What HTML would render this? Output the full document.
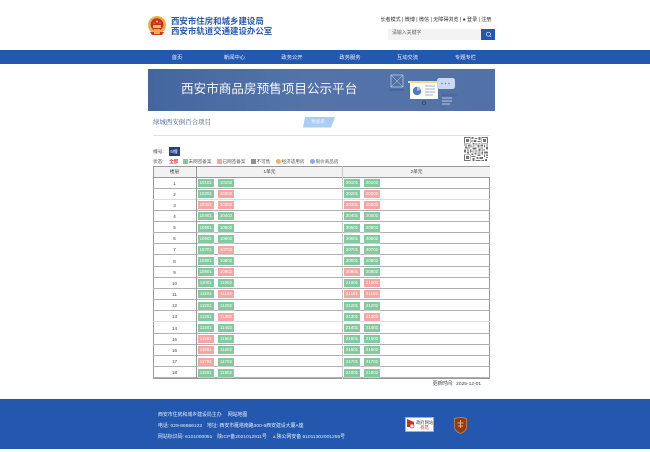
<!DOCTYPE html>
<html lang="zh-CN"><head><meta charset="utf-8"><title>西安市商品房预售项目公示平台</title>
<style>
html,body{margin:0;padding:0;background:#fff}
body{position:relative;width:650px;height:452px;overflow:hidden;font-family:"Liberation Sans","Noto Sans CJK SC",sans-serif;color:#444;filter:blur(.35px)}
.a{position:absolute;white-space:nowrap}
.n{position:absolute;top:50.5px;height:14px;line-height:14px;color:#eef3fb;font-size:5.3px;transform:translateX(-50%);white-space:nowrap}
.r{position:absolute;left:153px;width:337px;height:11.14px;border-bottom:.8px solid #b0b0b0;box-sizing:border-box}
.f{position:absolute;left:0;width:43px;text-align:center;font-size:4.6px;line-height:11px;color:#444}
.c{position:absolute;top:1.6px;width:16px;height:8px;line-height:8px;text-align:center;font-size:4.4px;color:#fff;box-shadow:0 0 0 .6px rgba(255,255,255,.6)}
.g{background:#83cb9f}.p{background:#f6a5a5;color:#fff}
.u1{left:44.7px}.u2{left:65px}.v1{left:191px}.v2{left:211px}
.ft{position:absolute;left:158px;color:#e3ecfa;font-size:4.9px;line-height:6px;white-space:nowrap}
.l{position:absolute;top:158.5px;font-size:4.6px;line-height:6px;color:#555;white-space:nowrap}
.s{position:absolute;top:159px;width:5px;height:5px}
</style></head><body>

<svg class="a" style="left:148px;top:15px" width="18" height="22" viewBox="0 0 18 22"><circle cx="9" cy="10" r="9" fill="#e5b245"/><circle cx="9" cy="9.5" r="6.3" fill="#cf2a22"/><rect x="5" y="10" width="8" height="3" fill="#efc65c"/><circle cx="9" cy="6.5" r="1.1" fill="#f3cf5e"/><circle cx="6" cy="8" r=".6" fill="#f3cf5e"/><circle cx="12" cy="8" r=".6" fill="#f3cf5e"/><path d="M2 17h14l-2 3H4z" fill="#d1352a"/><rect x="6" y="14" width="6" height="5" fill="#e5b245"/></svg>
<div class="a" style="left:171px;top:15.5px;font-size:8.45px;line-height:10.5px;color:#2a5ba8;font-weight:bold">西安市住房和城乡建设局<br>西安市轨道交通建设办公室</div>

<div class="a" style="left:380.5px;top:17px;font-size:5.05px;line-height:6px;color:#333">长者模式 | 微博 | 微信 | 无障碍浏览 | &#9679; 登录 | 注册</div>
<div class="a" style="left:388px;top:29px;width:93px;height:10.5px;background:#f3f3f3"></div>
<div class="a" style="left:392px;top:31px;font-size:4.9px;line-height:6.5px;color:#666">请输入关键字</div>
<div class="a" style="left:481px;top:29px;width:14px;height:10.5px;background:#2358ae"></div>
<svg class="a" style="left:484.5px;top:30.5px" width="7" height="7" viewBox="0 0 7 7"><circle cx="3.4" cy="3.2" r="2" fill="none" stroke="#dfe9f8" stroke-width=".7"/><path d="M4.8 4.7l1 1" stroke="#dfe9f8" stroke-width=".7"/></svg>

<div class="a" style="left:0;top:50px;width:650px;height:14px;background:#2358ae"></div>
<div class="n" style="left:177px">首页</div><div class="n" style="left:234.5px">新闻中心</div><div class="n" style="left:292px">政务公开</div><div class="n" style="left:350px">政务服务</div><div class="n" style="left:407.5px">互动交流</div><div class="n" style="left:465.5px">专题专栏</div>

<div class="a" style="left:148px;top:69px;width:347px;height:42px;background:linear-gradient(90deg,#44669f,#5373a9 45%,#5171a8 100%)"></div>
<div class="a" style="left:181px;top:81px;font-size:12.6px;line-height:16px;color:#f4f6fb">西安市商品房预售项目公示平台</div>
<svg class="a" style="left:385px;top:69px" width="110" height="42" viewBox="0 0 110 42">
<rect x="6" y="6" width="12" height="12" fill="none" stroke="#c5d2e8" stroke-width=".7"/><path d="M6 6l12 12M18 6L6 18" stroke="#c5d2e8" stroke-width=".5"/><path d="M5 21h14" stroke="#29406f" stroke-width=".7" stroke-dasharray="1 .6"/>
<rect x="23" y="12" width="32" height="2" fill="#f2d98c"/><rect x="25" y="14" width="28" height="16" fill="#fff"/>
<circle cx="32" cy="22" r="4.2" fill="#5678bd"/><path d="M32 22v-4.2a4.2 4.2 0 0 1 4 3z" fill="#a9bce4"/>
<path d="M40 17h10M40 20h10M40 23h10M40 26h8" stroke="#9fb2d3" stroke-width="1"/>
<rect x="52" y="9" width="18" height="11" rx="2.5" fill="#cdd8f3"/><circle cx="57" cy="14.5" r=".7" fill="#5678bd"/><circle cx="60.5" cy="14.5" r=".7" fill="#5678bd"/><circle cx="64" cy="14.5" r=".7" fill="#5678bd"/>
<circle cx="39" cy="34" r="1.8" fill="none" stroke="#29406f" stroke-width=".7"/>
<path d="M57 26h15" stroke="#29406f" stroke-width=".6" stroke-dasharray="1 .6"/><path d="M57 29h10M57 32h10M57 35h8" stroke="#bcc9e1" stroke-width="1"/>
</svg>

<div class="a" style="left:153px;top:118.5px;font-family:'Liberation Serif','Noto Serif CJK SC',serif;font-size:6.45px;line-height:8px;color:#3d5c8e">绿城西安倒百合项目</div>
<svg class="a" style="left:303px;top:116.5px" width="32" height="11"><path d="M2 0H32L28 10.5H0z" fill="#a9cdf3"/></svg>
<div class="a" style="left:303px;top:118px;width:30px;text-align:center;font-size:4.6px;line-height:7px;color:#f4f9ff">预查表</div>
<div class="a" style="left:153px;top:134.5px;width:337px;height:.8px;background:#e2e2e2"></div>

<svg class="a" style="left:464px;top:137px;opacity:.68;filter:blur(.3px)" width="24" height="24" viewBox="0 0 25 25" shape-rendering="crispEdges"><rect width="25" height="25" fill="#fff"/><path d="M0 0h7v7H0zM18 0h7v7h-7zM0 18h7v7H0z" fill="#333"/><path d="M1 1h5v5H1zM19 1h5v5h-5zM1 19h5v5H1z" fill="#fff"/><path d="M2 2h3v3H2zM20 2h3v3h-3zM2 20h3v3H2z" fill="#333"/><path d="M8 0h2v2H8zM11 1h3v1h-3zM15 0h2v3h-2zM8 3h1v2H8zM10 3h3v2h-3zM14 4h3v1h-3zM9 6h2v2H9zM12 6h1v3h-1zM14 6h3v1h-3zM0 8h3v1H0zM4 8h2v2H4zM7 8h1v3H7zM9 9h2v1H9zM14 8h2v3h-2zM17 8h3v2h-3zM21 8h1v3h-1zM23 8h2v1h-2zM1 10h2v2H1zM3 11h3v1H3zM9 11h4v2H9zM17 11h3v1h-3zM23 10h2v3h-2zM0 13h2v3H0zM3 13h2v1H3zM6 13h2v3H6zM9 14h1v2H9zM11 14h3v1h-3zM15 12h2v3h-2zM18 13h4v1h-4zM3 15h2v2H3zM11 16h2v2h-2zM14 16h3v1h-3zM18 15h2v3h-2zM21 15h4v2h-4zM8 17h2v2H8zM14 18h3v2h-3zM21 18h1v3h-1zM23 18h2v2h-2zM8 20h4v1H8zM13 21h2v2h-2zM16 21h4v2h-4zM23 21h2v1h-2zM9 22h2v3H9zM12 24h5v1h-5zM18 24h3v1h-3zM22 23h2v2h-2z" fill="#333"/></svg>

<div class="a" style="left:153px;top:148.5px;font-size:4.7px;line-height:6px;color:#555">幢号:</div>
<div class="a" style="left:168.5px;top:146.5px;width:11px;height:9.5px;line-height:9.5px;background:#22417e;color:#e8eefa;font-size:4.6px;text-align:center">5幢</div>

<div class="l" style="left:153px">状态:</div><div class="l" style="left:169px;color:#e22f2f;font-weight:bold">全部</div>
<div class="s" style="left:182.5px;background:#83cb9f"></div><div class="l" style="left:188.5px">未网签备案</div>
<div class="s" style="left:216.5px;background:#f6a5a5"></div><div class="l" style="left:222.5px">已网签备案</div>
<div class="s" style="left:250.5px;background:#8f8f8f"></div><div class="l" style="left:256.5px">不可售</div>
<div class="s" style="left:275.5px;background:#eeb365;border-radius:50%"></div><div class="l" style="left:281.5px">经济适用房</div>
<div class="s" style="left:309.5px;background:#8daee0;border-radius:50%"></div><div class="l" style="left:315.5px">限价商品房</div>

<div class="a" style="left:153px;top:166px;width:337px;height:212.5px;border:.8px solid #999;box-sizing:border-box"></div>
<div class="a" style="left:153.5px;top:166.5px;width:336px;height:11px;background:#f2f2f2"></div>
<div class="a" style="left:153px;top:177.2px;width:337px;height:.9px;background:#999"></div>
<div class="a" style="left:153px;top:167px;width:43px;text-align:center;font-size:4.7px;line-height:10px">楼层</div>
<div class="a" style="left:197px;top:167px;width:145px;text-align:center;font-size:4.7px;line-height:10px">1单元</div>
<div class="a" style="left:343px;top:167px;width:147px;text-align:center;font-size:4.7px;line-height:10px">2单元</div>

<div class="r" style="top:177.5px"><div class="f">1</div><div class="c g u1">10101</div><div class="c g u2">10102</div><div class="c g v1">20101</div><div class="c g v2">20102</div></div>
<div class="r" style="top:188.6px;border-bottom:1.6px solid #dcdcdc"><div class="f">2</div><div class="c g u1">10201</div><div class="c p u2">10202</div><div class="c g v1">20201</div><div class="c p v2">20202</div></div>
<div class="r" style="top:199.8px"><div class="f">3</div><div class="c p u1">10301</div><div class="c p u2">10302</div><div class="c p v1">20301</div><div class="c p v2">20302</div></div>
<div class="r" style="top:210.9px"><div class="f">4</div><div class="c g u1">10401</div><div class="c g u2">10402</div><div class="c g v1">20401</div><div class="c g v2">20402</div></div>
<div class="r" style="top:222.1px"><div class="f">5</div><div class="c g u1">10501</div><div class="c g u2">10502</div><div class="c g v1">20501</div><div class="c g v2">20502</div></div>
<div class="r" style="top:233.2px"><div class="f">6</div><div class="c g u1">10601</div><div class="c g u2">10602</div><div class="c g v1">20601</div><div class="c g v2">20602</div></div>
<div class="r" style="top:244.3px"><div class="f">7</div><div class="c g u1">10701</div><div class="c p u2">10702</div><div class="c g v1">20701</div><div class="c g v2">20702</div></div>
<div class="r" style="top:255.5px"><div class="f">8</div><div class="c g u1">10801</div><div class="c g u2">10802</div><div class="c g v1">20801</div><div class="c g v2">20802</div></div>
<div class="r" style="top:266.6px"><div class="f">9</div><div class="c g u1">10901</div><div class="c p u2">10902</div><div class="c p v1">20901</div><div class="c g v2">20902</div></div>
<div class="r" style="top:277.8px"><div class="f">10</div><div class="c g u1">11001</div><div class="c g u2">11002</div><div class="c g v1">21001</div><div class="c p v2">21002</div></div>
<div class="r" style="top:288.9px"><div class="f">11</div><div class="c g u1">11101</div><div class="c p u2">11102</div><div class="c p v1">21101</div><div class="c p v2">21102</div></div>
<div class="r" style="top:300px"><div class="f">12</div><div class="c g u1">11201</div><div class="c g u2">11202</div><div class="c g v1">21201</div><div class="c g v2">21202</div></div>
<div class="r" style="top:311.2px;border-bottom:1.6px solid #dcdcdc"><div class="f">13</div><div class="c g u1">11301</div><div class="c p u2">11302</div><div class="c g v1">21301</div><div class="c p v2">21302</div></div>
<div class="r" style="top:322.6px"><div class="f">14</div><div class="c g u1">11401</div><div class="c g u2">11402</div><div class="c g v1">21401</div><div class="c g v2">21402</div></div>
<div class="r" style="top:333.7px"><div class="f">15</div><div class="c p u1">11501</div><div class="c g u2">11502</div><div class="c g v1">21501</div><div class="c g v2">21502</div></div>
<div class="r" style="top:344.8px"><div class="f">16</div><div class="c p u1">11601</div><div class="c g u2">11602</div><div class="c g v1">21601</div><div class="c g v2">21602</div></div>
<div class="r" style="top:356px"><div class="f">17</div><div class="c p u1">11701</div><div class="c g u2">11702</div><div class="c g v1">21701</div><div class="c g v2">21702</div></div>
<div class="r" style="top:367.1px"><div class="f">18</div><div class="c g u1">11801</div><div class="c g u2">11802</div><div class="c g v1">21801</div><div class="c g v2">21802</div></div>

<div class="a" style="left:196.4px;top:166px;width:.8px;height:212.5px;background:#999"></div>
<div class="a" style="left:342.2px;top:166px;width:.8px;height:212.5px;background:#c8c8c8"></div>

<div class="a" style="left:432.5px;top:382px;font-size:4.9px;line-height:6px;color:#444">更新时间:&nbsp;&nbsp;2025-12-01</div>

<div class="a" style="left:0;top:399px;width:650px;height:50px;background:#2358ae"></div>
<div class="ft" style="top:412.5px">西安市住房和城乡建设局主办　&nbsp;网站地图</div>
<div class="ft" style="top:423.5px">电话: 029-86666123　地址: 西安市雁塔南路300-5西安建设大厦A座</div>
<div class="ft" style="top:434.5px">网站标识码: 6101000051　陕ICP备2021012911号　<span style="color:#e9a24a">&#9650;</span>陕公网安备 61011302001255号</div>

<div class="a" style="left:405px;top:417px;width:29px;height:15px;background:#fff;box-sizing:border-box;border:.8px solid #8fb0e0"></div>
<svg class="a" style="left:406px;top:418px" width="10" height="13" viewBox="0 0 10 13"><path d="M1 1l7 3v5H1z" fill="#c8302a"/><circle cx="6" cy="8" r="2" fill="#fff" stroke="#c8302a" stroke-width=".7"/></svg>
<div class="a" style="left:416px;top:420px;font-size:4.3px;line-height:5px;color:#444;text-align:center;width:17px">政府网站<br><span style="color:#c8302a">找错</span></div>
<svg class="a" style="left:453px;top:417px" width="15" height="17" viewBox="0 0 15 17"><path d="M1.5 1.5Q7.5-.5 13.5 1.5V10Q13.5 14 7.5 16.5 1.5 14 1.5 10z" fill="#8f3b24" stroke="#d08b3c" stroke-width=".8"/><path d="M7.5 3v8M4.5 6h6M5 9h5" stroke="#e9b35a" stroke-width="1"/></svg>
</body></html>
